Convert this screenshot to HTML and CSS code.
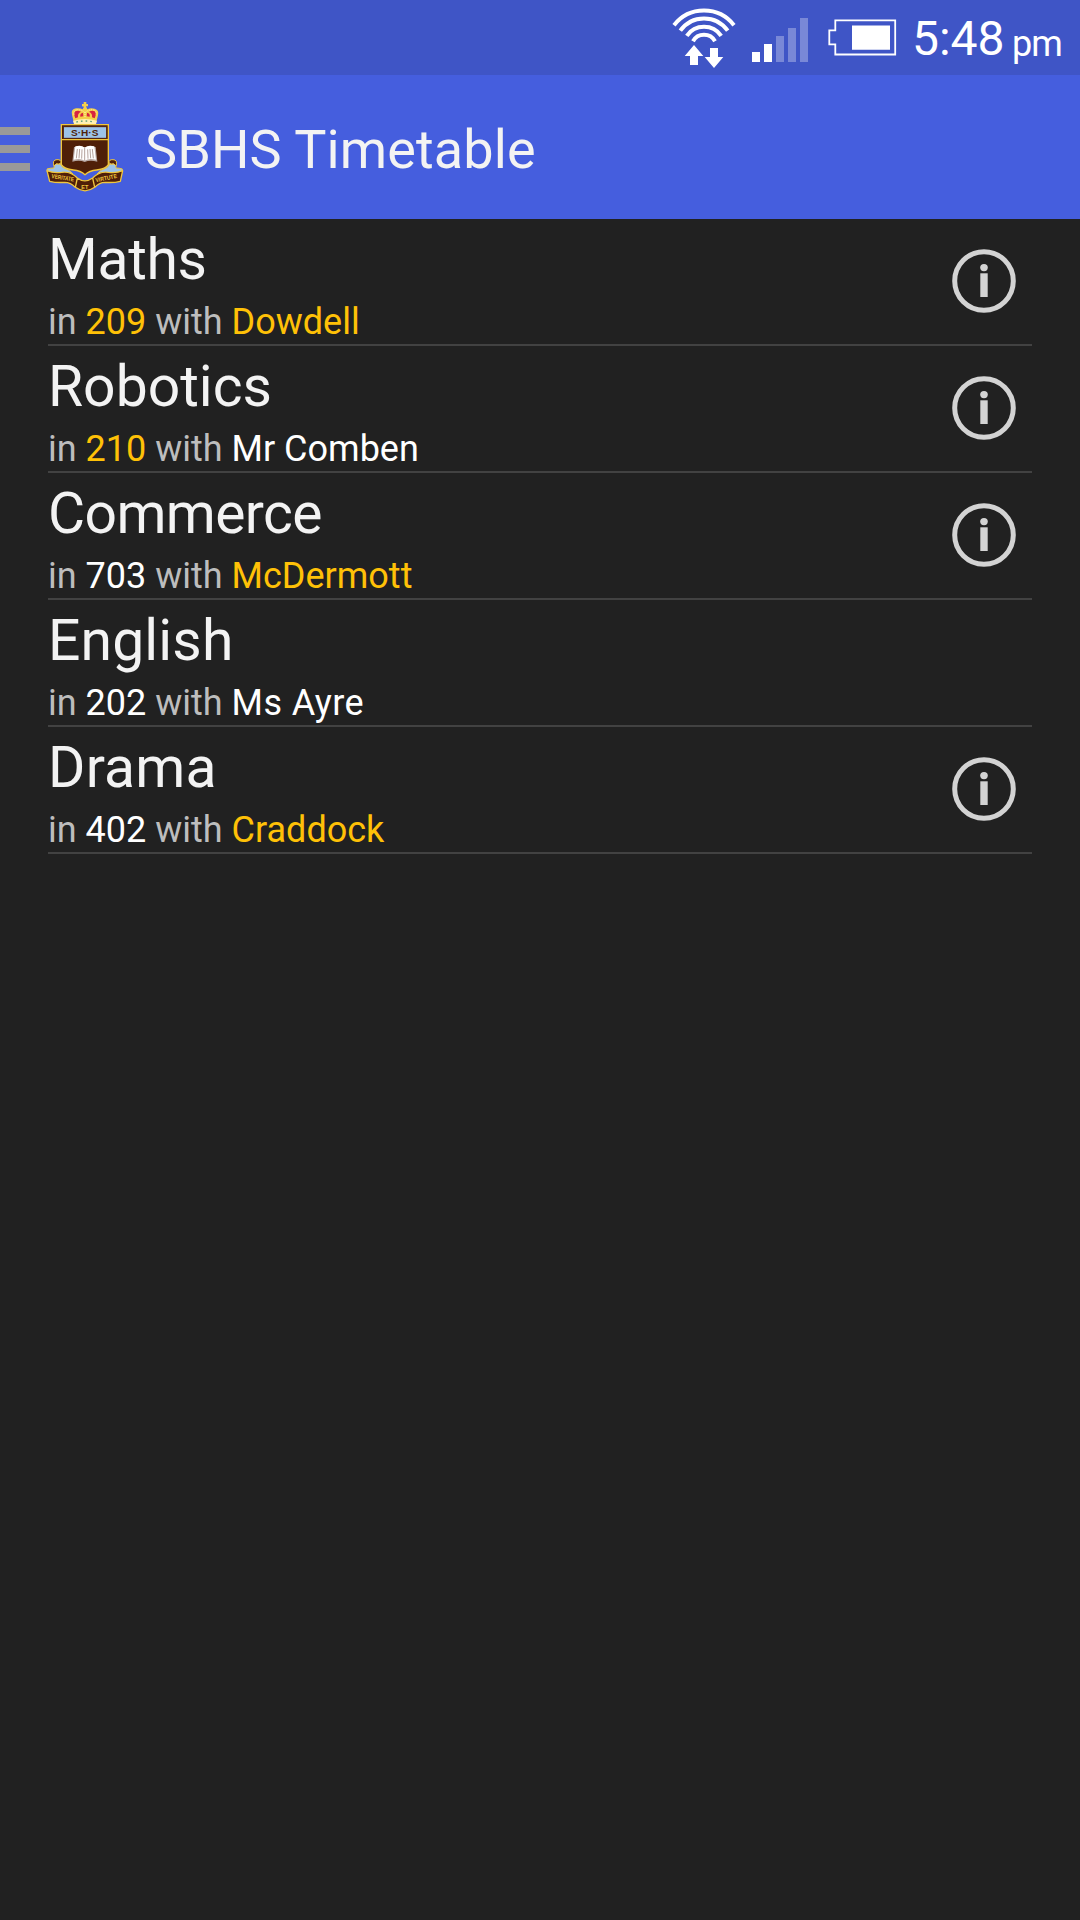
FILE: index.html
```html
<!DOCTYPE html>
<html lang="en">
<head>
<meta charset="utf-8">
<title>SBHS Timetable</title>
<link rel="stylesheet" href="styles.css">
</head>
<body>
<svg class="defs" width="0" height="0" aria-hidden="true">
  <symbol id="info" viewBox="0 0 64 64">
    <circle cx="32" cy="32" r="29.3" fill="none" stroke="#d3d3d3" stroke-width="5"/>
    <ellipse cx="32" cy="18.6" rx="3.800" ry="3.6" fill="#d3d3d3"/>
    <rect x="28.3" y="24.3" width="7.4" height="23.7" fill="#d3d3d3"/>
  </symbol>
</svg>
<header class="status">
  <svg class="wifi" width="64" height="75" viewBox="672 0 64 75">
    <g fill="none" stroke="#fff" stroke-width="4">
      <path d="M674 25.2A38 38 0 0 1 734 25.2"/>
      <path d="M680.3 30.7A29 29 0 0 1 727.7 30.7"/>
      <path d="M686.8 35.8A21 21 0 0 1 721.2 35.8"/>
      <path d="M693 41.2A12.6 12.6 0 0 1 715 41.2"/>
    </g>
    <path fill="#fff" d="M694 45l9.3 11H698v9h-8v-9h-5.300zM710 48h8v9h5.300L714 68l-9.300-11H710z"/>
  </svg>
  <svg class="signal" width="56" height="75" viewBox="752 0 56 75" fill="#fff">
    <path d="M752 52h8v10h-8zM764 44h8v18h-8z"/>
    <path opacity=".3" d="M776 36h8v26h-8zM788 28h8v34h-8zM800 18h8v44h-8z"/>
  </svg>
  <svg class="battery" width="70" height="75" viewBox="828 0 70 75">
    <path fill="none" stroke="#fff" stroke-width="1.800" d="M835.300 20.300H895.200V54.500H835.300V44.300H829.300V30.300H835.300Z"/>
    <path fill="#fff" d="M852 25.500h38v24.200h-38z"/>
  </svg>
  <span class="clock">5:48</span><span class="ampm">pm</span>
</header>
<div class="appbar">
  <div class="drawer"><i></i><i></i><i></i></div>
  <svg class="crest" width="78" height="92" viewBox="138 33 234 276">
    <!-- crown -->
    <path fill="#f4cf4a" d="M222 100L216 74Q212 57 228 55Q240 53 248 58L252 50L246 49V42H251V36H259V42H264V49H258L262 58Q272 52 284 56Q298 60 294 76L288 100Z"/>
    <path fill="#d8233f" d="M226 85Q219 69 226 64Q234 60 243 65Q232 70 234 82ZM284 85Q291 69 284 64Q276 60 267 65Q278 70 276 82ZM241 80Q239 70 249 68L250 79ZM269 80Q271 70 261 68L260 79Z"/>
    <path fill="none" stroke="#fff3b0" stroke-width="3" stroke-dasharray="3 3" d="M222 74Q220 60 233 59Q248 60 255 68Q262 60 277 59Q290 60 288 74M255 66V84"/>
    <path fill="#fff0b4" d="M219 92Q255 82 291 92L288 102H222Z"/>
    <path fill="none" stroke="#5aa077" stroke-width="4" stroke-dasharray="5 9" d="M229 96Q255 90 283 96"/>
    <!-- shield -->
    <path fill="#4f1f08" stroke="#f0c63c" stroke-width="4" d="M184 104H325V224Q318 237 290 240Q268 242 255 254Q242 242 220 240Q192 237 184 224Z"/>
    <path fill="#9cc3e8" stroke="#4f1f08" stroke-width="3" d="M190 110H320V145H190Z"/>
    <path stroke="#f0c63c" stroke-width="4" d="M184 149H325"/>
    <text class="crest-name" x="213" y="137" textLength="82" lengthAdjust="spacingAndGlyphs">S·H·S</text>
    <!-- open book -->
    <path fill="#b5a5a0" d="M222 171L217 215Q238 209 254 216Q270 209 292 215L287 171Z"/>
    <path fill="#fff" d="M226 169Q245 164 254 173Q264 164 283 169L288 209Q266 204 254 212Q242 204 221 209Z"/>
    <path fill="none" stroke="#6b463a" stroke-width="1.500" d="M254 173V212M232 177L229 205M239 177L237 205M246 178L245 206M263 178L264 206M270 177L272 205M277 177L280 205"/>
    <!-- ribbon -->
    <path fill="#9cc3e8" stroke="#f0c63c" stroke-width="3" d="M141 237Q150 234 162 234L163 222H181L188 232Q210 240 218 251L196 250L142 246ZM367 237Q358 234 348 234L347 222H329L322 232Q300 240 292 251L314 250L366 246Z"/>
    <path fill="#4f1f08" stroke="#f0c63c" stroke-width="3" d="M162 228Q156 209 171 209Q184 208 183 219Q177 224 169 221ZM348 228Q354 209 339 209Q326 208 327 219Q333 224 341 221Z"/>
    <path fill="#4f1f08" stroke="#f0c63c" stroke-width="4" stroke-linejoin="round" d="M141 242Q160 250 185 247Q212 243 232 264Q254 281 278 264Q298 243 325 247Q350 250 368 242L361 274Q340 279 316 277Q298 277 284 292Q255 313 226 292Q212 277 194 277Q170 279 149 274ZM232 264L226 292M278 264L284 292"/>
    <g class="motto">
      <text transform="translate(154 264) rotate(9)" textLength="68" lengthAdjust="spacingAndGlyphs">VERITATE</text>
      <text x="244" y="297" textLength="21" lengthAdjust="spacingAndGlyphs">ET</text>
      <text transform="translate(288 277) rotate(-12)" textLength="65" lengthAdjust="spacingAndGlyphs">VIRTUTE</text>
    </g>
  </svg>
  <h1>SBHS Timetable</h1>
</div>
<main class="list">
  <section class="row">
    <div class="lesson"><h2 class="maths">Maths</h2><p>in <b class="changed">209</b> with <b class="changed">Dowdell</b></p></div>
    <svg class="info"><use href="#info"/></svg>
  </section>
  <section class="row">
    <div class="lesson"><h2>Robotics</h2><p>in <b class="changed">210</b> with <b>Mr Comben</b></p></div>
    <svg class="info"><use href="#info"/></svg>
  </section>
  <section class="row">
    <div class="lesson"><h2 class="commerce">Commerce</h2><p>in <b>703</b> with <b class="changed">McDermott</b></p></div>
    <svg class="info"><use href="#info"/></svg>
  </section>
  <section class="row">
    <div class="lesson"><h2 class="english">English</h2><p>in <b>202</b> with <b class="ayre">Ms Ayre</b></p></div>
  </section>
  <section class="row">
    <div class="lesson"><h2 class="drama">Drama</h2><p>in <b>402</b> with <b class="changed">Craddock</b></p></div>
    <svg class="info"><use href="#info"/></svg>
  </section>
</main>
</body>
</html>
```
FILE: styles.css
```css
* { box-sizing: border-box; }
body { margin: 0; min-height: 1920px; background: #212121; color: #f3f3f3; font-family: Roboto, sans-serif; }
svg { display: block; flex: none; }
.defs { position: absolute; }
h1, h2, p { margin: 0; font-weight: 400; white-space: nowrap; }
b { font-weight: 400; color: #fff; }

.status { height: 75px; background: #3f55c6; color: #fff; display: flex; padding-left: 672px; white-space: nowrap; }
.signal { margin-left: 16px; }
.battery { margin-left: 20px; }
.clock { margin-left: 14px; width: 100px; font-size: 48px; line-height: 78px; }
.ampm { font-size: 36px; line-height: 89px; letter-spacing: -1px; }

.appbar { height: 144px; background: #455ede; display: flex; align-items: center; }
.drawer { width: 30px; display: grid; gap: 10px; margin-top: 4px; }
.drawer i { height: 8px; background: #999; }
.crest { margin: 0 0 0 16px; }
.crest-name { font: 700 25px "Liberation Sans", sans-serif; fill: #4f1f08; }
.motto { font: 700 18px "Liberation Sans", sans-serif; fill: #f0c63c; }
h1 { margin-left: 21px; padding-top: 5px; font-size: 54px; line-height: 64px; letter-spacing: 0.12px; }

.list { padding: 0 48px; }
.row { height: 127px; border-bottom: 2px solid #424242; display: flex; justify-content: space-between; }
.lesson { padding-top: 8px; }
h2 { font-size: 57px; line-height: 66px; }
.maths { letter-spacing: -0.3px; }
.commerce { letter-spacing: -0.6px; }
.english { letter-spacing: 0.15px; }
.drama { letter-spacing: 0.25px; }
p { font-size: 36px; line-height: 42px; padding-top: 8px; color: #bdbdbd; }
.changed { color: #ffc107; }
.ayre { letter-spacing: 0.4px; }
.info { width: 64px; height: 64px; margin: 30px 16px 0 0; }
```
